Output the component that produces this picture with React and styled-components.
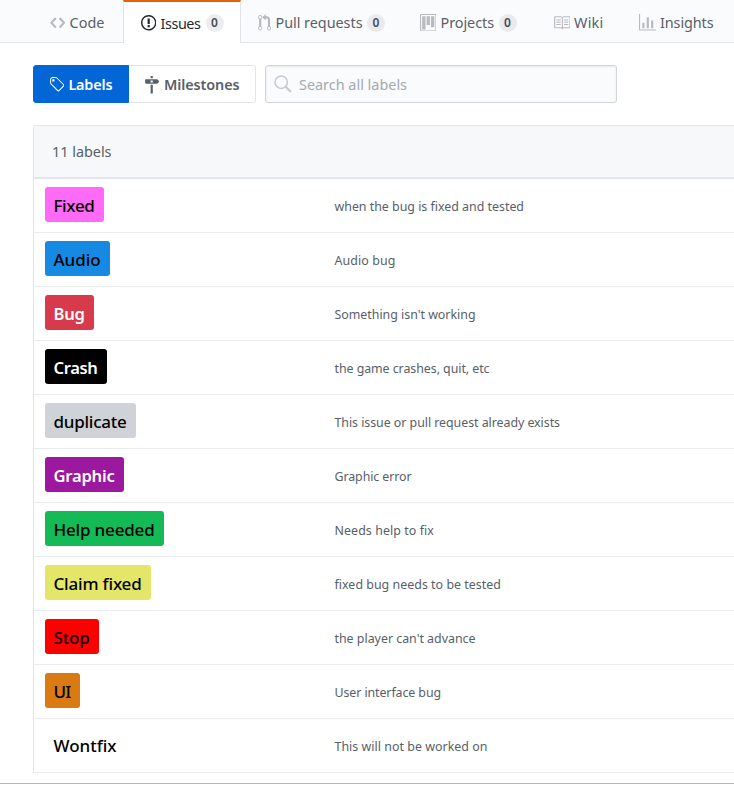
import React, { useLayoutEffect, useRef, useState } from "react";
import styled, { createGlobalStyle } from "styled-components";

const GlobalStyle = createGlobalStyle`
  * { box-sizing: border-box; }
  body {
    margin: 0;
    background: #fff;
    color: #24292e;
    font-family: "Segoe UI", "Noto Sans", "Open Sans", sans-serif;
    font-size: 14.4px;
    overflow: hidden;
  }
`;

const icons = {
  code: [14, "M9.5 3L8 4.5 11.5 8 8 11.5 9.5 13 14 8 9.5 3zm-5 0L0 8l4.5 5L6 11.5 2.5 8 6 4.5 4.5 3z"],
  issue: [14, "M7 2.3c3.14 0 5.7 2.56 5.7 5.7s-2.56 5.7-5.7 5.7A5.71 5.71 0 0 1 1.3 8c0-3.14 2.56-5.7 5.7-5.7zM7 1C3.14 1 0 4.14 0 8s3.14 7 7 7 7-3.14 7-7-3.14-7-7-7zm1 3H6v5h2V4zm0 6H6v2h2v-2z"],
  pull: [12, "M11 11.28V5c-.03-.78-.34-1.47-.94-2.06C9.46 2.35 8.78 2.03 8 2H7V0L4 3l3 3V4h1c.27.02.48.11.69.31.21.2.3.42.31.69v6.28A1.993 1.993 0 0 0 10 15a1.993 1.993 0 0 0 1-3.72zm-1 2.92c-.66 0-1.2-.55-1.2-1.2 0-.65.55-1.2 1.2-1.2.65 0 1.2.55 1.2 1.2 0 .65-.55 1.2-1.2 1.2zM4 3c0-1.11-.89-2-2-2a1.993 1.993 0 0 0-1 3.72v6.56A1.993 1.993 0 0 0 2 15a1.993 1.993 0 0 0 1-3.72V4.72c.59-.34 1-.98 1-1.72zm-.8 10c0 .66-.55 1.2-1.2 1.2-.65 0-1.2-.55-1.2-1.2 0-.65.55-1.2 1.2-1.2.65 0 1.2.55 1.2 1.2zM2 4.2C1.34 4.2.8 3.65.8 3c0-.65.55-1.2 1.2-1.2.65 0 1.2.55 1.2 1.2 0 .65-.55 1.2-1.2 1.2z"],
  project: [15, "M10 12h3V2h-3v10zm-4-2h3V2H6v8zm-4 4h3V2H2v12zm-1 1h13V1H1v14zM14 0H1a1 1 0 0 0-1 1v14a1 1 0 0 0 1 1h13a1 1 0 0 0 1-1V1a1 1 0 0 0-1-1z"],
  book: [16, "M3 5h4v1H3V5zm0 3h4V7H3v1zm0 2h4V9H3v1zm11-5h-4v1h4V5zm0 2h-4v1h4V7zm0 2h-4v1h4V9zm2-6v9c0 .55-.45 1-1 1H9.5l-1 1-1-1H2c-.55 0-1-.45-1-1V3c0-.55.45-1 1-1h5.5l1 1 1-1H15c.55 0 1 .45 1 1zm-8 .5L7.5 3H2v9h6V3.5zm7-.5H9.5l-.5.5V12h6V3z"],
  graph: [16, "M16 14v1H0V0h1v14h15zM5 13H3V8h2v5zm4 0H7V3h2v10zm4 0h-2V6h2v7z"],
  tag: [14, "M7.73 1.73C7.26 1.26 6.62 1 5.96 1H3.5C2.13 1 1 2.13 1 3.5v2.47c0 .66.27 1.3.73 1.77l6.06 6.06c.39.39 1.02.39 1.41 0l4.59-4.59a.996.996 0 0 0 0-1.41L7.73 1.73zM2.38 7.09c-.31-.3-.47-.7-.47-1.13V3.5c0-.88.72-1.59 1.59-1.59h2.47c.42 0 .83.16 1.13.47l6.14 6.13-4.73 4.73-6.13-6.15zM3.01 3h2v2H3V3h.01z"],
  milestone: [14, "M8 2H6V0h2v2zm4 5H2c-.55 0-1-.45-1-1V4c0-.55.45-1 1-1h10l2 2-2 2zM8 4H6v2h2V4zM6 16h2V8H6v8z"],
};

const Svg = styled.svg`
  display: block;
  flex: none;
  fill: currentColor;
`;

function Octicon({ name }) {
  const [width, path] = icons[name];
  return (
    <Svg width={width * 1.1} height={17.6} viewBox={`0 0 ${width} 16`} aria-hidden="true">
      <path fillRule="evenodd" d={path} />
    </Svg>
  );
}

const TextBox = styled.span`
  display: block;
  flex: none;
  width: ${(p) => p.$width}px;
  white-space: nowrap;
`;

/* Text that is tracked in or out so that it fills its column exactly. */
function FitText({ width, children }) {
  const ref = useRef(null);
  const [tracking, setTracking] = useState(0);
  useLayoutEffect(() => {
    setTracking((width - ref.current.getBoundingClientRect().width) / children.length);
  }, [width, children]);
  return (
    <TextBox $width={width}>
      <span ref={ref} style={{ letterSpacing: `${tracking}px` }}>{children}</span>
    </TextBox>
  );
}

const Nav = styled.nav`
  display: flex;
  height: 43px;
  padding-left: 33px;
  background: #fafbfc;
  border-bottom: 1px solid #e1e4e8;
`;

const Tab = styled.a`
  display: flex;
  flex: none;
  align-items: center;
  width: ${(p) => p.$width}px;
  height: ${(p) => (p.$active ? 43 : 42)}px;
  padding: ${(p) => (p.$active ? "1px 0 0 17px" : "3px 0 0 16.5px")};
  color: ${(p) => (p.$active ? "#24292e" : "#586069")};
  background: ${(p) => (p.$active ? "#fff" : "transparent")};
  border: solid #e1e4e8;
  border-width: ${(p) => (p.$active ? "2px 1px 0" : "0")};
  border-top-color: #e36209;
`;

const TabIcon = styled.span`
  flex: none;
  width: ${(p) => p.$width}px;
  color: ${(p) => (p.$active ? "#24292e" : "#b8babd")};
`;

const Counter = styled.span`
  width: 18px;
  height: 18px;
  margin-left: ${(p) => (p.$active ? 5 : 4.5)}px;
  border-radius: 9px;
  background: ${(p) => (p.$active ? "#ededee" : "#e9eaec")};
  color: #444d56;
  font-size: 12px;
  font-weight: 600;
  line-height: 18px;
  text-align: center;
`;

const Toolbar = styled.div`
  display: flex;
  height: 38px;
  margin: 22px 0 22px 33px;
`;

const Segment = styled.button`
  display: flex;
  align-items: center;
  gap: ${(p) => p.$gap}px;
  width: ${(p) => p.$width}px;
  padding: 0 0 0 15px;
  font: 600 14.4px "Segoe UI", "Noto Sans", "Open Sans", sans-serif;
  color: ${(p) => (p.$selected ? "#fff" : "#586069")};
  background: ${(p) => (p.$selected ? "#0366d6" : "#fff")};
  border: 1px solid ${(p) => (p.$selected ? "#0366d6" : "#e1e4e8")};
  border-left-width: ${(p) => (p.$selected ? 1 : 0)}px;
  border-radius: ${(p) => (p.$selected ? "3px 0 0 3px" : "0 3px 3px 0")};
`;

const SegmentIcon = styled.span`
  padding-top: 2px;
`;

const SearchField = styled.div`
  display: flex;
  align-items: center;
  gap: 7px;
  width: 352px;
  margin-left: 9px;
  padding-left: 8px;
  color: #a3aab1;
  background: #fafbfc;
  border: 1px solid #d1d5da;
  border-radius: 3px;
  box-shadow: inset 0 1px 2px rgba(27, 31, 35, 0.075);
`;

const SearchGlyph = styled.svg`
  flex: none;
  display: block;
  fill: none;
  stroke: #c6c9cd;
`;

const List = styled.section`
  width: 720px;
  margin-left: 33px;
  border: solid #e1e4e8;
  border-width: 1px 0 0 1px;
  border-radius: 3px 0 0 0;
`;

const ListHeader = styled.header`
  display: flex;
  align-items: center;
  height: 53px;
  padding-left: 18px;
  color: #586069;
  background: #f6f8fa;
  border-bottom: 2px solid #e3e6ea;
`;

const Row = styled.div`
  display: grid;
  grid-template-columns: 289.5px 1fr;
  height: 54px;
  padding: 8px 0 0 11px;
  border-bottom: 1px solid #e9ebee;
`;

const Label = styled.span`
  justify-self: start;
  height: 35px;
  padding: 0 9.5px 0 8.5px;
  border-radius: 3px;
  color: ${(p) => p.$color};
  background: ${(p) => p.$background};
  font-size: ${(p) => (p.$color === "#fff" ? 16.6 : 17)}px;
  font-weight: ${(p) => (p.$color === "#fff" ? 600 : 500)};
  line-height: 37px;
`;

const Description = styled.span`
  color: #586069;
  font-size: 12.4px;
  line-height: 40px;
`;

const Footer = styled.footer`
  margin-top: 10px;
  border-top: 1px solid #b4b6b8;
`;

const tabs = [
  { icon: "code", text: "Code", width: 90, iconBox: 20, textWidth: 35 },
  { icon: "issue", text: "Issues", width: 118, iconBox: 19.5, textWidth: 40, count: 0, active: true },
  { icon: "pull", text: "Pull requests", width: 162, iconBox: 18, textWidth: 87, count: 0 },
  { icon: "project", text: "Projects", width: 133, iconBox: 21, textWidth: 53.5, count: 0 },
  { icon: "book", text: "Wiki", width: 86, iconBox: 21.5, textWidth: 29.5 },
  { icon: "graph", text: "Insights", width: 112, iconBox: 21.5, textWidth: 53.5 },
];

const labels = [
  ["Fixed", 41, "#ff6af6", "#000", "when the bug is fixed and tested", 189.5],
  ["Audio", 47, "#168ae2", "#000", "Audio bug", 61],
  ["Bug", 31, "#d73a4a", "#fff", "Something isn't working", 141],
  ["Crash", 44, "#000", "#fff", "the game crashes, quit, etc", 155],
  ["duplicate", 73, "#cfd3d7", "#000", "This issue or pull request already exists", 225.5],
  ["Graphic", 61, "#9b189f", "#fff", "Graphic error", 77],
  ["Help needed", 101, "#14ba55", "#000", "Needs help to fix", 99.5],
  ["Claim fixed", 88, "#e4e669", "#000", "fixed bug needs to be tested", 166.5],
  ["Stop", 36, "#ff0000", "#000", "the player can't advance", 141],
  ["UI", 17, "#d97b12", "#000", "User interface bug", 106.5],
  ["Wontfix", 63, "#fff", "#000", "This will not be worked on", 153],
];

export default function App() {
  return (
    <>
      <GlobalStyle />
      <Nav>
        {tabs.map((t) => (
          <Tab key={t.text} $width={t.width} $active={t.active}>
            <TabIcon $width={t.iconBox} $active={t.active}><Octicon name={t.icon} /></TabIcon>
            <FitText width={t.textWidth}>{t.text}</FitText>
            {t.count !== undefined && <Counter $active={t.active}>{t.count}</Counter>}
          </Tab>
        ))}
      </Nav>
      <Toolbar>
        <Segment $selected $width={96} $gap={4}>
          <SegmentIcon><Octicon name="tag" /></SegmentIcon>
          <FitText width={44}>Labels</FitText>
        </Segment>
        <Segment $width={127} $gap={4.6}>
          <SegmentIcon><Octicon name="milestone" /></SegmentIcon>
          <FitText width={75.5}>Milestones</FitText>
        </Segment>
        <SearchField>
          <SearchGlyph width="18" height="18" viewBox="0 0 18 18" aria-hidden="true">
            <circle cx="7.2" cy="7.2" r="6.2" strokeWidth="1.5" />
            <path d="M11.7 11.7L17 17" strokeWidth="2.2" />
          </SearchGlyph>
          <FitText width={108}>Search all labels</FitText>
        </SearchField>
      </Toolbar>
      <List>
        <ListHeader><FitText width={59.5}>11 labels</FitText></ListHeader>
        {labels.map(([name, width, background, color, description, descWidth]) => (
          <Row key={name}>
            <Label $background={background} $color={color}><FitText width={width}>{name}</FitText></Label>
            <Description><FitText width={descWidth}>{description}</FitText></Description>
          </Row>
        ))}
      </List>
      <Footer />
    </>
  );
}
